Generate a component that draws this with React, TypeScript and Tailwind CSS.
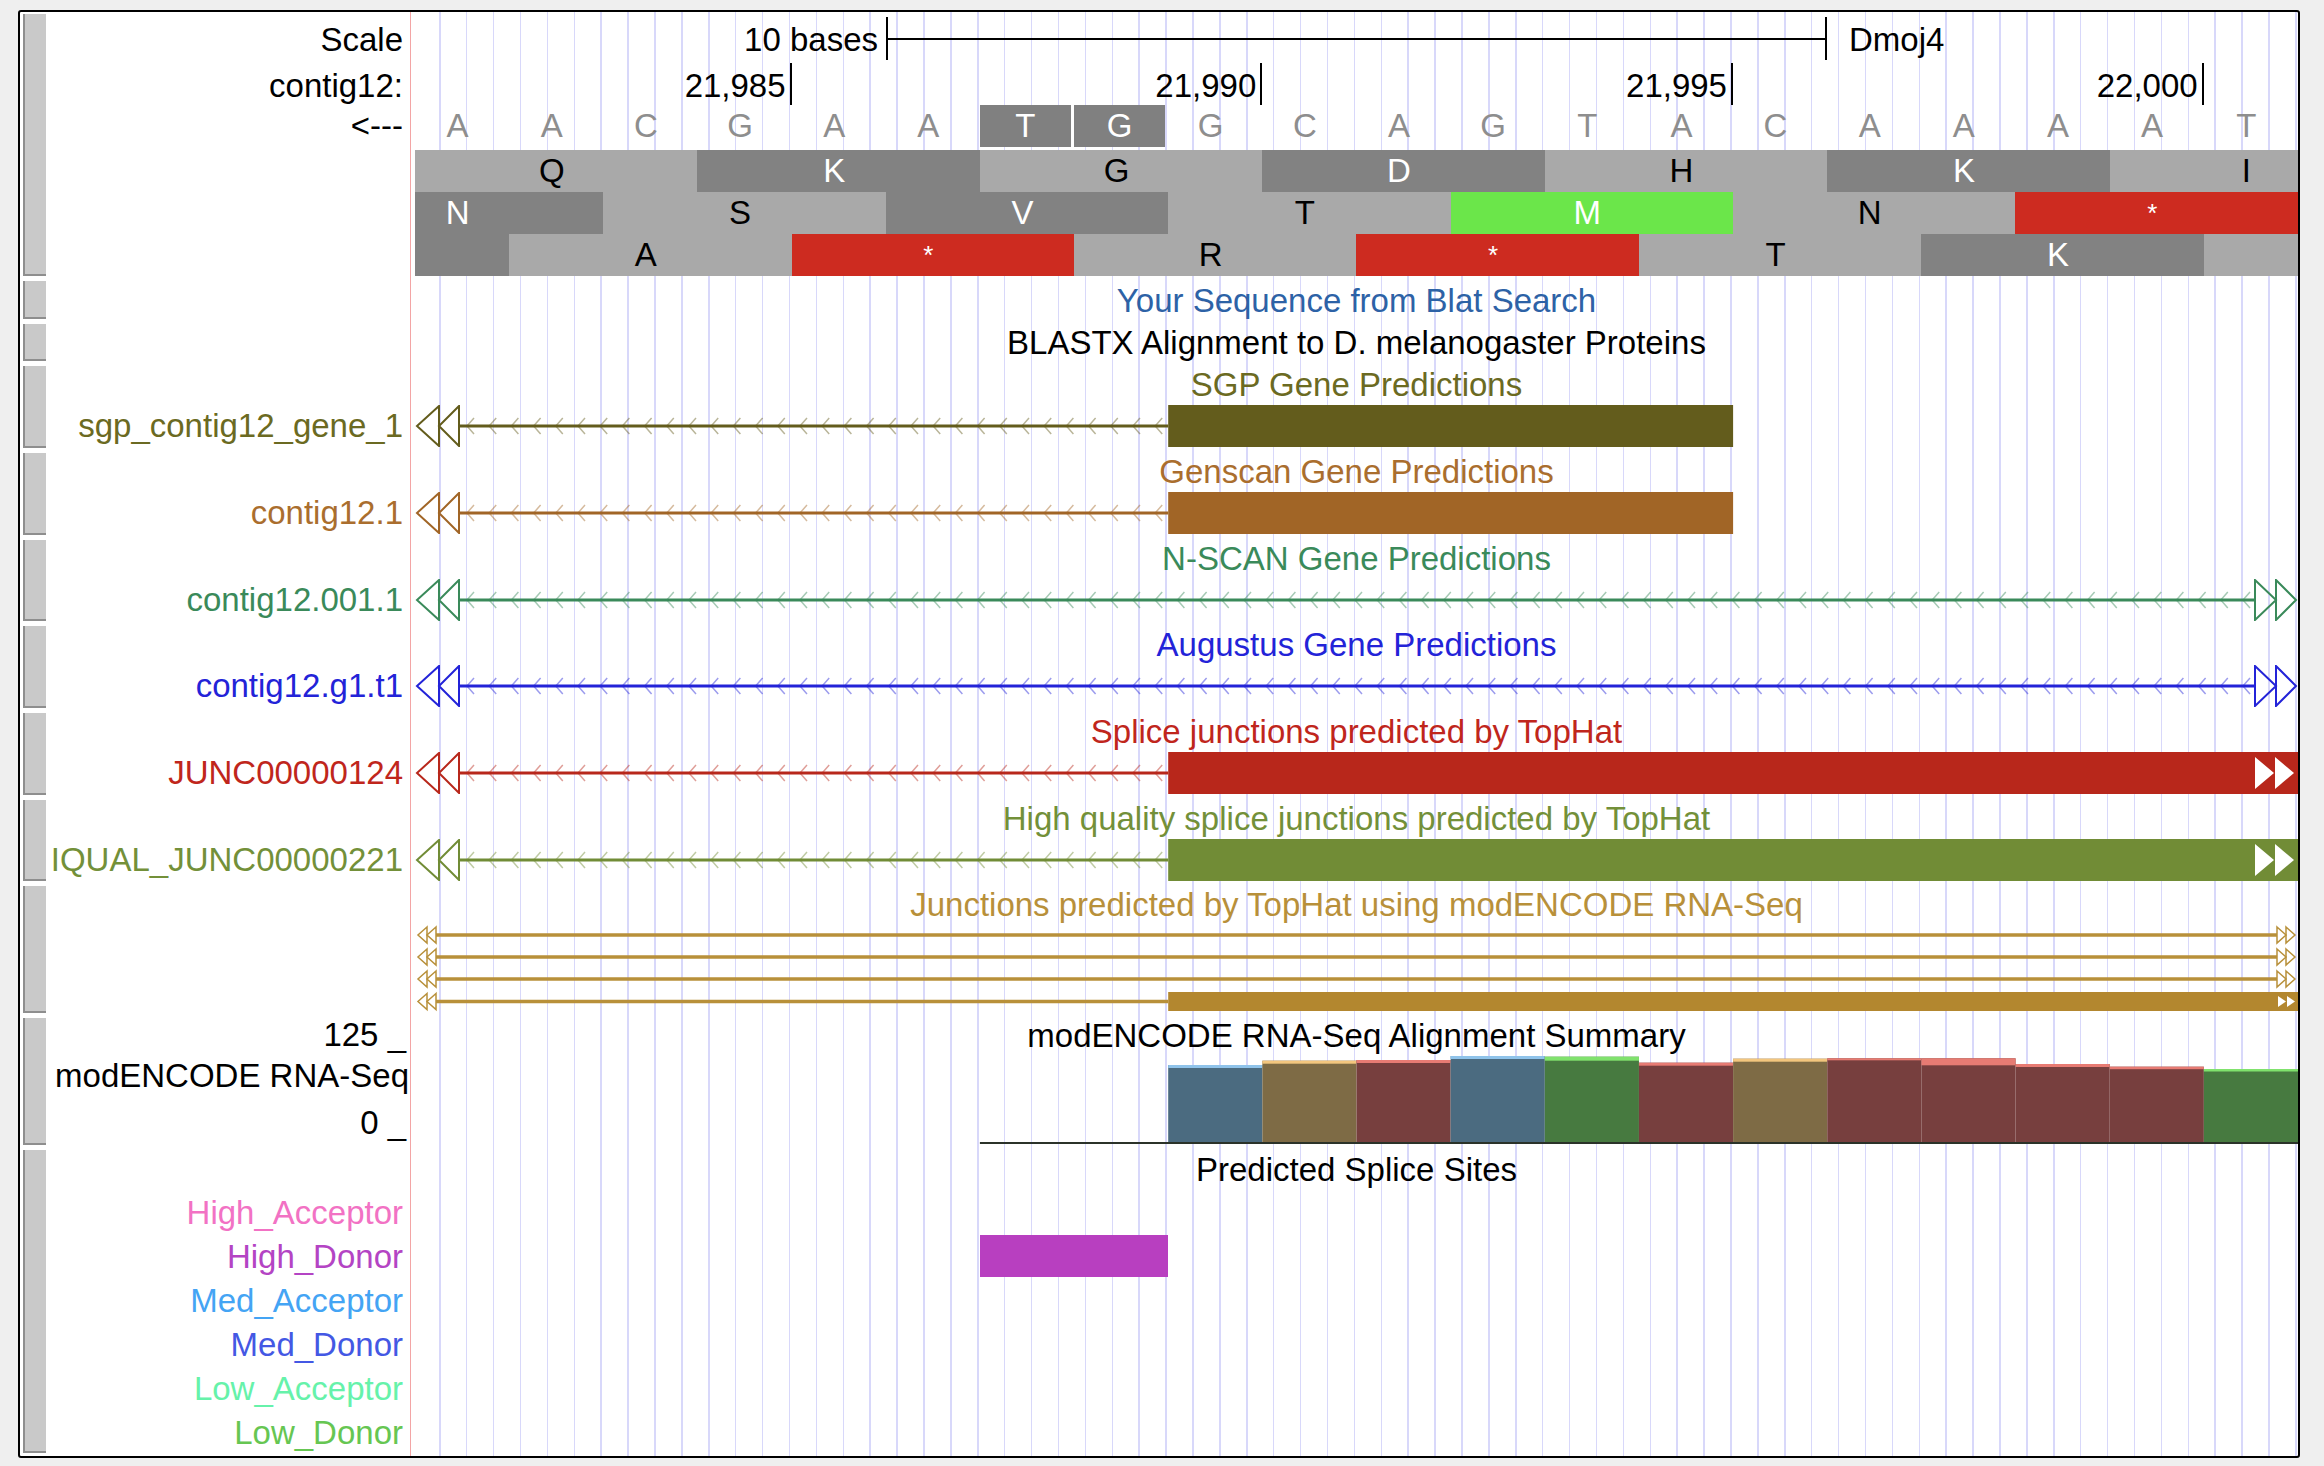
import React from 'react';

// one base is 94.15px wide, 20 bases fill the data column
const BASE = 94.15;
const DATA_W = 1883;
const SEQ = 'AACGAATGGCAGTACAAAAT'.split('');
const TICKS: Record<number, string> = { 3: '21,985', 8: '21,990', 13: '21,995', 18: '22,000' };

type Kind = 'light' | 'dark' | 'red' | 'green';
type Codon = { c: number; aa: string; kind: Kind };

const FRAMES: Codon[][] = [
  [
    { c: 0, aa: 'Q', kind: 'light' },
    { c: 3, aa: 'K', kind: 'dark' },
    { c: 6, aa: 'G', kind: 'light' },
    { c: 9, aa: 'D', kind: 'dark' },
    { c: 12, aa: 'H', kind: 'light' },
    { c: 15, aa: 'K', kind: 'dark' },
    { c: 18, aa: 'I', kind: 'light' },
  ],
  [
    { c: -1, aa: 'N', kind: 'dark' },
    { c: 2, aa: 'S', kind: 'light' },
    { c: 5, aa: 'V', kind: 'dark' },
    { c: 8, aa: 'T', kind: 'light' },
    { c: 11, aa: 'M', kind: 'green' },
    { c: 14, aa: 'N', kind: 'light' },
    { c: 17, aa: '*', kind: 'red' },
  ],
  [
    { c: -2, aa: '', kind: 'dark' },
    { c: 1, aa: 'A', kind: 'light' },
    { c: 4, aa: '*', kind: 'red' },
    { c: 7, aa: 'R', kind: 'light' },
    { c: 10, aa: '*', kind: 'red' },
    { c: 13, aa: 'T', kind: 'light' },
    { c: 16, aa: 'K', kind: 'dark' },
    { c: 19, aa: '', kind: 'light' },
  ],
];

const kindClass: Record<Kind, string> = {
  light: 'bg-[#a9a9a9] text-black',
  dark: 'bg-[#828282] text-white',
  red: 'bg-[#cd2b20] text-white',
  green: 'bg-[#6be64a] text-white',
};

const GENES = [
  { title: 'SGP Gene Predictions', label: 'sgp_contig12_gene_1', text: 'text-[#6b6a22]', color: '#635c1c', h: 'h-[87px]', bar: [8, 14] },
  { title: 'Genscan Gene Predictions', label: 'contig12.1', text: 'text-[#aa6e2e]', color: '#a16526', h: 'h-[87px]', bar: [8, 14] },
  { title: 'N-SCAN Gene Predictions', label: 'contig12.001.1', text: 'text-[#3a8a5a]', color: '#3a8a5a', h: 'h-[86px]', right: true },
  { title: 'Augustus Gene Predictions', label: 'contig12.g1.t1', text: 'text-[#2323d8]', color: '#2323d8', h: 'h-[87px]', right: true },
  { title: 'Splice junctions predicted by TopHat', label: 'JUNC00000124', text: 'text-[#c0261c]', color: '#b8271b', h: 'h-[87px]', bar: [8, 20], barArrows: true },
  { title: 'High quality splice junctions predicted by TopHat', label: 'IQUAL_JUNC00000221', text: 'text-[#739039]', color: '#718c36', h: 'h-[86px]', bar: [8, 20], barArrows: true },
];

const COVERAGE = [
  { k: 'blue', top: 10, cap: 3 },
  { k: 'brown', top: 5.7, cap: 3 },
  { k: 'red', top: 5, cap: 3 },
  { k: 'blue', top: 1, cap: 3 },
  { k: 'green', top: 1.7, cap: 4 },
  { k: 'red', top: 7.7, cap: 3 },
  { k: 'brown', top: 3.7, cap: 3 },
  { k: 'red', top: 3.3, cap: 2 },
  { k: 'red', top: 3.3, cap: 7 },
  { k: 'red', top: 9, cap: 3 },
  { k: 'red', top: 11.7, cap: 2.5 },
  { k: 'green', top: 14, cap: 2.5 },
];

const covColor: Record<string, [string, string]> = {
  blue: ['#4b6b80', '#8fc3ea'],
  brown: ['#7e6b45', '#f3c67e'],
  red: ['#773f3e', '#e77b73'],
  green: ['#477a40', '#80e26d'],
};

const SPLICE = [
  { label: 'High_Acceptor', text: 'text-[#f272c4]' },
  { label: 'High_Donor', text: 'text-[#b444c4]' },
  { label: 'Med_Acceptor', text: 'text-[#44a4f4]' },
  { label: 'Med_Donor', text: 'text-[#4458e4]' },
  { label: 'Low_Acceptor', text: 'text-[#66f2aa]' },
  { label: 'Low_Donor', text: 'text-[#66c652]' },
];

function Track({ h, label, children }: { h: string; label?: React.ReactNode; children?: React.ReactNode }) {
  return (
    <div className={`flex shrink-0 ${h}`}>
      <div className="w-[26px] shrink-0 pl-[3px] pt-[2px] pb-[3px]">
        <div className="h-full w-[23px] bg-[#c9c9c9] border-l-2 border-b-2 border-[#8e8e8e]" />
      </div>
      <div className="w-[365px] shrink-0 border-r border-[#f3a5a5] pr-[7px] flex flex-col items-end">{label}</div>
      <div className="w-[4px] shrink-0" />
      <div className="w-[1883px] shrink-0 flex flex-col bg-[image:repeating-linear-gradient(90deg,transparent_0px,transparent_24px,#d8d8fa_24px,#d8d8fa_25.5px,transparent_25.5px,transparent_26.9px)]">
        {children}
      </div>
    </div>
  );
}

function AminoRow({ codons }: { codons: Codon[] }) {
  return (
    <div className="flex h-[42px]">
      {codons.map((cd) => {
        const s = Math.max(cd.c, 0);
        const e = Math.min(cd.c + 3, 20);
        return (
          <div key={cd.c} className={`h-full overflow-hidden shrink-0 ${kindClass[cd.kind]}`} style={{ width: (e - s) * BASE }}>
            <div className="h-full flex items-center justify-center shrink-0 pr-[9px]" style={{ width: 3 * BASE, marginLeft: (cd.c - s) * BASE }}>
              {cd.aa === '*' ? <span className="text-[26px]">*</span> : cd.aa}
            </div>
          </div>
        );
      })}
    </div>
  );
}

function GeneGlyph({ color, bar, right, barArrows }: { color: string; bar?: number[]; right?: boolean; barArrows?: boolean }) {
  const lineEnd = bar ? bar[0] * BASE : right ? 1840 : DATA_W;
  const chevrons: number[] = [];
  for (let x = 52; x + 11 < lineEnd; x += 22.2) chevrons.push(x);
  return (
    <svg width={DATA_W} height={42} className="block">
      <line x1={44} y1={21} x2={lineEnd} y2={21} stroke={color} strokeWidth={3} />
      {chevrons.map((x) => (
        <path key={x} d={`M${x + 7} 13 L${x} 21 L${x + 7} 29`} fill="none" stroke={color} strokeOpacity={0.45} strokeWidth={1.5} />
      ))}
      <path d="M24 1 L2 21 L24 41 Z" fill="none" stroke={color} strokeWidth={2} />
      <path d="M44 1 L24 21 L44 41 Z" fill="none" stroke={color} strokeWidth={2} />
      {right && (
        <>
          <path d="M1840 1 L1861 21 L1840 41 Z" fill="none" stroke={color} strokeWidth={2} />
          <path d="M1861 1 L1881 21 L1861 41 Z" fill="none" stroke={color} strokeWidth={2} />
        </>
      )}
      {bar && <rect x={bar[0] * BASE} y={0} width={(bar[1] - bar[0]) * BASE} height={42} fill={color} />}
      {barArrows && (
        <>
          <path d="M1840 5 L1859 21 L1840 37 Z" fill="white" />
          <path d="M1860 5 L1879 21 L1860 37 Z" fill="white" />
        </>
      )}
    </svg>
  );
}

function JunctionGlyph() {
  const c = '#b8903a';
  const ys = [10, 32, 54, 76.5];
  return (
    <svg width={DATA_W} height={91} className="block">
      {ys.map((y, i) => (
        <g key={y}>
          <line x1={21} y1={y} x2={i === 3 ? 753.2 : 1862} y2={y} stroke={c} strokeWidth={3.5} />
          <path d={`M12 ${y - 8} L3 ${y} L12 ${y + 8} Z`} fill="none" stroke={c} strokeWidth={1.5} />
          <path d={`M21 ${y - 8} L12 ${y} L21 ${y + 8} Z`} fill="none" stroke={c} strokeWidth={1.5} />
          {i < 3 && (
            <>
              <path d={`M1862 ${y - 8} L1871 ${y} L1862 ${y + 8} Z`} fill="none" stroke={c} strokeWidth={1.5} />
              <path d={`M1871 ${y - 8} L1880 ${y} L1871 ${y + 8} Z`} fill="none" stroke={c} strokeWidth={1.5} />
            </>
          )}
        </g>
      ))}
      <rect x={753.2} y={67} width={DATA_W - 753.2} height={19} fill="#b3872f" />
      <path d="M1863 71 L1871 76.5 L1863 82 Z" fill="white" />
      <path d="M1872 71 L1880 76.5 L1872 82 Z" fill="white" />
    </svg>
  );
}

function CoverageGraph() {
  return (
    <svg width={DATA_W} height={93} className="block">
      {COVERAGE.map((b, i) => {
        const x = (8 + i) * BASE;
        const [body, cap] = covColor[b.k];
        return (
          <g key={i}>
            <rect x={x} y={b.top} width={BASE} height={87 - b.top} fill={body} />
            <rect x={x} y={b.top} width={BASE} height={b.cap} fill={cap} />
          </g>
        );
      })}
      <rect x={6 * BASE} y={87} width={DATA_W - 6 * BASE} height={2} fill="#2b3329" />
    </svg>
  );
}

export default function App() {
  return (
    <div className="min-h-screen w-full bg-[#efefef] pt-[10px] pl-[18px] font-['Liberation_Sans',Arial,sans-serif] text-[33px] leading-[38px] text-black">
      <div className="w-[2282px] h-[1448px] border-2 border-black rounded-[3px] bg-white flex flex-col overflow-hidden">
        {/* ruler, bases and three-frame translation */}
        <Track
          h="h-[267px]"
          label={
            <>
              <div className="h-[51px] flex items-end pb-[4px]">Scale</div>
              <div className="h-[42px] flex items-end">contig12:</div>
              <div className="h-[42px] flex items-center">{'<---'}</div>
            </>
          }
        >
          <div className="h-[51px] grid grid-cols-[1fr_941px_1fr]">
            <div className="flex items-end justify-end pb-[4px] pr-[8px] whitespace-nowrap">10 bases</div>
            <div className="mt-[5px] h-[43px] border-x-2 border-black flex items-center">
              <div className="h-[2px] w-full bg-black" />
            </div>
            <div className="flex items-end pb-[4px] pl-[22px]">Dmoj4</div>
          </div>
          <div className="h-[42px] flex">
            {SEQ.map((_, i) => (
              <div key={i} className="w-[94.15px] shrink-0 flex items-end justify-end">
                {TICKS[i] && (
                  <>
                    <span className="whitespace-nowrap">{TICKS[i]}</span>
                    <div className="w-[2px] h-[42px] bg-black ml-[4px] shrink-0" />
                  </>
                )}
              </div>
            ))}
          </div>
          <div className="h-[42px] flex">
            {SEQ.map((b, i) =>
              i === 6 || i === 7 ? (
                <div key={i} className="w-[94.15px] shrink-0 pr-[3px]">
                  <div className="h-full bg-[#808080] text-white flex items-center justify-center">{b}</div>
                </div>
              ) : (
                <div key={i} className="w-[94.15px] shrink-0 flex items-center justify-center pr-[9px] text-[#8e8e8e]">
                  {b}
                </div>
              )
            )}
          </div>
          <div className="h-[3px]" />
          {FRAMES.map((f, i) => (
            <AminoRow key={i} codons={f} />
          ))}
        </Track>

        <Track h="h-[43px]">
          <div className="h-full flex items-center justify-center text-[#2d62a6]">Your Sequence from Blat Search</div>
        </Track>
        <Track h="h-[42px]">
          <div className="h-full flex items-center justify-center">BLASTX Alignment to D. melanogaster Proteins</div>
        </Track>

        {GENES.map((g) => (
          <Track
            key={g.title}
            h={g.h}
            label={
              <>
                <div className="h-[41px]" />
                <div className={`h-[42px] flex items-center whitespace-nowrap ${g.text}`}>{g.label}</div>
              </>
            }
          >
            <div className={`h-[41px] flex items-center justify-center ${g.text}`}>{g.title}</div>
            <GeneGlyph color={g.color} bar={g.bar} right={g.right} barArrows={g.barArrows} />
          </Track>
        ))}

        <Track h="h-[132px]">
          <div className="h-[41px] flex items-center justify-center text-[#b8903a]">Junctions predicted by TopHat using modENCODE RNA-Seq</div>
          <JunctionGlyph />
        </Track>

        <Track
          h="h-[132px]"
          label={
            <>
              <div className="h-[38px] flex items-center mr-[-3px]">125 _</div>
              <div className="h-[44px] flex items-center mr-[-6px] whitespace-nowrap">modENCODE RNA-Seq</div>
              <div className="h-[50px] flex items-center mr-[-3px]">0 _</div>
            </>
          }
        >
          <div className="h-[39px] flex items-center justify-center">modENCODE RNA-Seq Alignment Summary</div>
          <CoverageGraph />
        </Track>

        <Track
          h="h-[308px]"
          label={
            <>
              <div className="h-[43px]" />
              {SPLICE.map((s) => (
                <div key={s.label} className={`h-[44px] flex items-center ${s.text}`}>
                  {s.label}
                </div>
              ))}
            </>
          }
        >
          <div className="h-[43px] flex items-center justify-center">Predicted Splice Sites</div>
          <div className="h-[44px]" />
          <div className="h-[44px] flex items-start">
            <div className="h-[42px] w-[188.3px] ml-[564.9px] bg-[#b83fc0]" />
          </div>
        </Track>
      </div>
    </div>
  );
}
